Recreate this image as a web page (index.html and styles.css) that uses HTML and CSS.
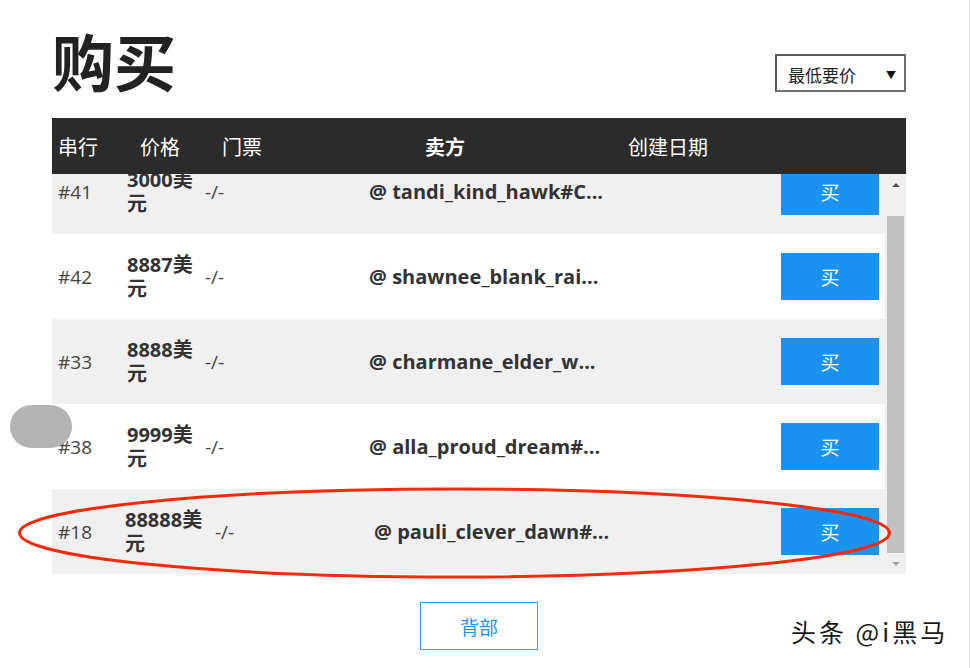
FILE: index.html
```html
<!DOCTYPE html>
<html lang="zh">
<head>
  <meta charset="UTF-8" />
  <meta name="viewport" content="width=device-width, initial-scale=1.0"/>
  <title>购买</title>
  <link rel="stylesheet" href="styles.css">
</head>
<body>

<div class="frame">
  <div class="shop">
    <div class="top">
      <h1>购买</h1>
      <div class="sort">最低要价 <span class="caret">▼</span></div>
    </div>

    <div class="thead">
      <span>串行</span>
      <span>价格</span>
      <span>门票</span>
      <span class="strong">卖方</span>
      <span>创建日期</span>
    </div>

    <div class="tbody">
      <div class="rows">
        <div class="row grey">
          <span class="num">#41</span>
          <span class="price">3000美元</span>
          <span class="ticket">-/-</span>
          <span class="seller">@ tandi_kind_hawk#C...</span>
          <span><button class="buy">买</button></span>
        </div>
        <div class="row">
          <span class="num">#42</span>
          <span class="price">8887美元</span>
          <span class="ticket">-/-</span>
          <span class="seller">@ shawnee_blank_rai...</span>
          <span><button class="buy">买</button></span>
        </div>
        <div class="row grey">
          <span class="num">#33</span>
          <span class="price">8888美元</span>
          <span class="ticket">-/-</span>
          <span class="seller">@ charmane_elder_w...</span>
          <span><button class="buy">买</button></span>
        </div>
        <div class="row">
          <span class="num">#38</span>
          <span class="price">9999美元</span>
          <span class="ticket">-/-</span>
          <span class="seller">@ alla_proud_dream#...</span>
          <span><button class="buy">买</button></span>
        </div>
        <div class="row grey wide">
          <span class="num">#18</span>
          <span class="price">88888美元</span>
          <span class="ticket">-/-</span>
          <span class="seller">@ pauli_clever_dawn#...</span>
          <span><button class="buy">买</button></span>
        </div>
      </div>

      <!-- полоса прокрутки -->
      <div class="scrollbar">
        <div class="sb-btn"><i class="arrow-up"></i></div>
        <div class="thumb"></div>
        <div class="sb-btn"><i class="arrow-down"></i></div>
      </div>
    </div>

    <div class="back-wrap">
      <button class="back">背部</button>
    </div>
  </div>

  <div class="blob"></div>

  <svg class="mark" width="971" height="668" viewBox="0 0 971 668">
    <ellipse cx="454.5" cy="533" rx="435" ry="44" fill="none" stroke="#f42a0c" stroke-width="3"/>
  </svg>

  <div class="watermark">头条 @i黑马</div>
</div>

</body>
</html>
```

FILE: styles.css
```css
* { box-sizing: border-box; margin: 0; padding: 0; }
body {
  background: #fff;
  font-family: 'Open Sans', 'Noto Sans CJK SC', sans-serif;
  color: #333;
}

.frame {
  position: relative;
  width: 970px;
  height: 668px;
  border-right: 1px solid #e3e3e3;
  overflow: hidden;
}

.shop {
  margin-left: 52px;
  width: 854px;
}

.top {
  height: 118px;
  padding-top: 29px;
  display: flex;
  justify-content: space-between;
  align-items: flex-start;
}

.top h1 {
  font-family: 'Noto Sans CJK SC', sans-serif;
  font-size: 62px;
  line-height: 62px;
  font-weight: 700;
  color: #222;
}

.sort {
  margin-top: 25px;
  width: 131px;
  height: 38px;
  border: 2px solid #5c5c5c;
  border-right-color: #6f6f6f;
  border-bottom-color: #6f6f6f;
  display: flex;
  align-items: center;
  justify-content: space-between;
  padding: 2px 8px 0 11px;
  font-family: 'Noto Sans CJK SC', sans-serif;
  font-size: 17px;
  color: #222;
}

.sort .caret { font-size: 10px; color: #111; }

.thead {
  height: 56px;
  background: #2b2b2b;
  color: #fff;
  display: grid;
  grid-template-columns: 82px 82px 203px 203px 1fr;
  align-items: center;
  font-family: 'Noto Sans CJK SC', sans-serif;
  font-size: 20px;
}

.thead span { padding-left: 6px; }
.thead .strong { font-weight: 700; }

.tbody {
  display: flex;
  height: 400px;
  overflow: hidden;
}

.rows {
  width: 833px;
  margin-top: -25px;
}

.row {
  height: 85px;
  display: grid;
  grid-template-columns: 69px 78px 164px 1fr 110px;
  align-items: center;
  background: #fff;
  font-size: 19px;
}

.row.grey { background: #f0f0f0; }
.row.wide { grid-template-columns: 67px 90px 159px 1fr 110px; }

.row span { padding-left: 6px; }

.num, .ticket { color: #444; }

.price {
  font-size: 20px;
  font-weight: 700;
  line-height: 24px;
  color: #333;
}

.seller {
  font-size: 20px;
  font-weight: 700;
  color: #333;
  white-space: nowrap;
}

.buy {
  width: 98px;
  height: 47px;
  border: none;
  background: #1993ef;
  color: #fff;
  font-family: 'Noto Sans CJK SC', sans-serif;
  font-size: 19px;
}

.scrollbar {
  width: 21px;
  background: #f0f0f0;
  display: flex;
  flex-direction: column;
}

.sb-btn {
  height: 21px;
  display: flex;
  align-items: center;
  justify-content: center;
}

.arrow-up {
  border-left: 4px solid transparent;
  border-right: 4px solid transparent;
  border-bottom: 4px solid #505050;
}

.arrow-down {
  border-left: 4px solid transparent;
  border-right: 4px solid transparent;
  border-top: 4px solid #a3a3a3;
}

.thumb {
  margin: 21px 2px 0;
  height: 337px;
  background: #c1c1c1;
}

.back-wrap {
  text-align: center;
  padding-top: 28px;
}

.back {
  width: 118px;
  height: 48px;
  border: 1px solid #3a9ff0;
  background: #fff;
  color: #1a93ef;
  font-family: 'Noto Sans CJK SC', sans-serif;
  font-size: 19px;
}

/* пометки поверх скриншота */
.blob {
  position: absolute;
  left: 10px;
  top: 405px;
  width: 62px;
  height: 43px;
  border-radius: 22px;
  background: #b3b3b3;
}

.mark {
  position: absolute;
  left: 0;
  top: 0;
  pointer-events: none;
}

.watermark {
  position: absolute;
  left: 791px;
  top: 613px;
  font-family: 'Noto Sans CJK SC', sans-serif;
  font-size: 25px;
  letter-spacing: 3px;
  color: #1a1a1a;
  text-shadow: 0 0 2px #fff, 1px 1px 0 #fff;
}
```
